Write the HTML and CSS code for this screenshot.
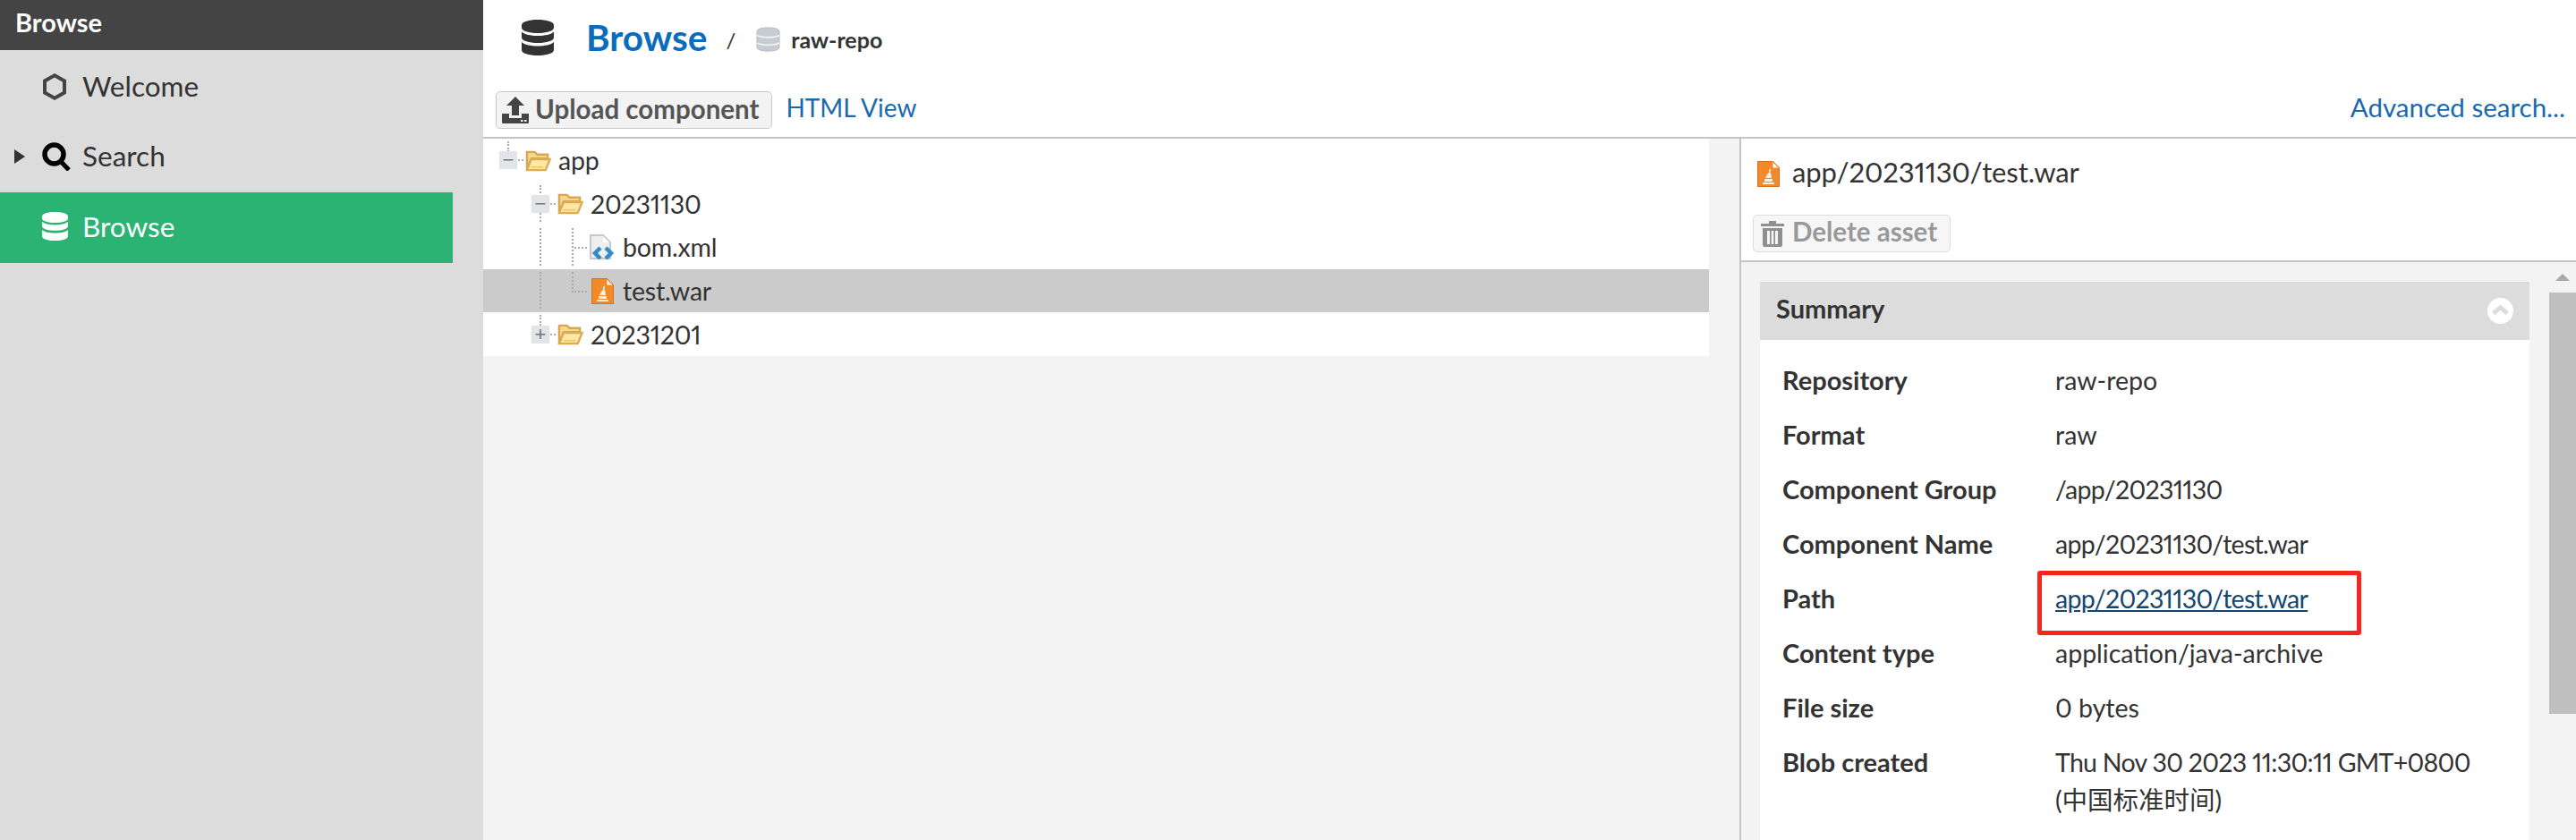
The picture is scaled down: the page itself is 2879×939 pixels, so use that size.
FILE: index.html
```html
<!DOCTYPE html>
<html lang="en">
<head>
<meta charset="utf-8">
<title>Browse</title>
<link rel="stylesheet" href="styles.css">
</head>
<body>
<svg class="defs" width="0" height="0" aria-hidden="true">
  <defs>
    <symbol id="db" viewBox="0 0 36 40">
      <path fill="currentColor" d="M18 0C8 0 0 2.500 0 6v3c0 3.500 8 6 18 6s18-2.500 18-6V6c0-3.500-8-6-18-6z"/>
      <path fill="currentColor" d="M0 13.500V20c0 3.500 8 6 18 6s18-2.500 18-6v-6.500c-3 3-10 4.500-18 4.500S3 16.500 0 13.500z"/>
      <path fill="currentColor" d="M0 25v9c0 3.500 8 6 18 6s18-2.500 18-6v-9c-3 3-10 4.500-18 4.500S3 28 0 25z"/>
    </symbol>
    <symbol id="folder" viewBox="0 0 30 25">
      <path fill="#f6d88c" stroke="#d6a755" stroke-width="2.500" d="M2 23V2.500h9l3 3h12V10H7z"/>
      <path fill="#fde9a6" stroke="#dcab56" stroke-width="2.500" d="M2 23.500l5-12.500h21.500l-5 12.500z"/>
      <path fill="none" stroke="#f8c95f" stroke-width="2" d="M7 20h14"/>
    </symbol>
    <symbol id="war" viewBox="0 0 25 29">
      <path fill="#f08a2a" stroke="#d9731a" d="M.5.500h17l7 7v21H.5z"/>
      <path fill="#fff" d="M17.500 1.500v6h6z"/>
      <path fill="#ffeede" d="M6 24h13v2H6zM8 20h9v3H8zM9 19l2-4 2-2v-3l2-2-.500 5 1 2 .500 4z"/>
    </symbol>
  </defs>
</svg>
<div class="app">
  <aside class="sidebar">
    <div class="side-title">Browse</div>
    <nav class="menu">
      <a class="menu-item">
        <span class="menu-icon"><svg class="ico-hex" viewBox="0 0 28 30"><path fill="none" stroke="#444" stroke-width="4" d="M14 2.300l11 6.200v13l-11 6.200L3 21.500v-13z"/></svg></span>
        <span>Welcome</span>
      </a>
      <a class="menu-item">
        <span class="caret"></span>
        <span class="menu-icon"><svg class="ico-search" viewBox="0 0 32 32"><circle cx="13.500" cy="13.500" r="10.500" fill="none" stroke="#000" stroke-width="5.500"/><path stroke="#000" stroke-width="5" d="M20.500 21l9.500 10"/></svg></span>
        <span>Search</span>
      </a>
      <a class="menu-item active">
        <span class="menu-icon"><svg class="ico-db"><use href="#db"/></svg></span>
        <span>Browse</span>
      </a>
    </nav>
  </aside>
  <main class="main">
    <header class="head">
      <svg class="head-db"><use href="#db"/></svg>
      <h1 class="head-title">Browse</h1>
      <span class="crumb-sep">/</span>
      <svg class="repo-db" viewBox="0 0 27 28">
        <path fill="#c6ccd1" stroke="#b4babf" d="M1 5c0-5.500 25-5.500 25 0v18c0 5.500-25 5.500-25 0z"/>
        <path fill="none" stroke="#eef0f2" stroke-width="2" d="M1 9.500c5 3 20 3 25 0M1 18c5 3 20 3 25 0"/>
      </svg>
      <span class="crumb">raw-repo</span>
    </header>
    <div class="toolbar">
      <button class="btn">
        <svg class="btn-ico" viewBox="0 0 30 30"><path fill="#444" d="M15 0l10 10h-6v11h-8V10H5z"/><path fill="#444" d="M0 19h8v5h14v-5h8v10a1 1 0 0 1-1 1H1a1 1 0 0 1-1-1z"/><path fill="#f3f3f3" d="M21 26h2.500v2H21zM25 26h2.500v2H25z"/></svg>
        <span class="btn-text">Upload component</span>
      </button>
      <a class="link">HTML View</a>
      <a class="link adv">Advanced search...</a>
    </div>
    <div class="panes">
      <section class="tree-pane">
        <ul class="tree">
          <li class="row">
            <span class="guide g-top lvl0"></span>
            <span class="expander">&#8722;</span>
            <span class="hdash"></span>
            <svg class="t-ico"><use href="#folder"/></svg>
            <span class="t-label">app</span>
          </li>
          <li class="row indent1">
            <span class="guide g-full lvl1"></span>
            <span class="expander">&#8722;</span>
            <span class="hdash"></span>
            <svg class="t-ico"><use href="#folder"/></svg>
            <span class="t-label">20231130</span>
          </li>
          <li class="row indent2">
            <span class="guide g-full lvl1"></span>
            <span class="guide g-full lvl2"></span>
            <span class="hdash long"></span>
            <svg class="t-ico xml" viewBox="0 0 29 28">
              <path fill="#eceeef" stroke="#c4c8cb" stroke-width="2" d="M1 1h14l8 8v18H1z"/>
              <path fill="#fff" d="M15 2v7h7z"/>
              <path fill="none" stroke="#2f8cc6" stroke-width="4.500" d="M12 15l-6 6 6 6M18 15l6 6-6 6"/>
            </svg>
            <span class="t-label">bom.xml</span>
          </li>
          <li class="row indent2 selected">
            <span class="guide g-full lvl1"></span>
            <span class="guide g-half lvl2"></span>
            <span class="hdash long"></span>
            <svg class="t-ico war"><use href="#war"/></svg>
            <span class="t-label">test.war</span>
          </li>
          <li class="row indent1">
            <span class="guide g-top lvl1"></span>
            <span class="expander">+</span>
            <span class="hdash"></span>
            <svg class="t-ico"><use href="#folder"/></svg>
            <span class="t-label">20231201</span>
          </li>
        </ul>
      </section>
      <section class="detail">
        <div class="detail-head">
          <div class="asset-title">
            <svg class="asset-ico"><use href="#war"/></svg>
            <span class="asset-name">app/20231130/test.war</span>
          </div>
          <button class="btn btn-disabled">
            <svg class="trash" viewBox="0 0 26 30"><path fill="#8f8f8f" fill-rule="evenodd" d="M0 4h9V1h8v3h9v3H0zM2 9h22v19a2 2 0 0 1-2 2H4a2 2 0 0 1-2-2zM7 12v15h3V12zM11.700 12v15h2.600V12zM16 12v15h3V12z"/></svg>
            <span class="btn-text">Delete asset</span>
          </button>
        </div>
        <div class="detail-body">
          <div class="scroll-content">
            <div class="panel">
              <div class="panel-head">
                <span class="panel-title">Summary</span>
                <span class="collapse"><svg viewBox="0 0 30 30"><circle cx="15" cy="15" r="15" fill="#fff"/><path fill="none" stroke="#dcdcdc" stroke-width="5" d="M7 18l8-7 8 7"/></svg></span>
              </div>
              <dl class="summary">
                <dt>Repository</dt><dd>raw-repo</dd>
                <dt>Format</dt><dd>raw</dd>
                <dt>Component Group</dt><dd><span class="tight">/app/20231130</span></dd>
                <dt>Component Name</dt><dd><span class="tight">app/20231130/test.war</span></dd>
                <dt>Path</dt><dd class="path-cell"><a class="path-link tight">app/20231130/test.war</a><span class="redbox"></span></dd>
                <dt>Content type</dt><dd>application/java-archive</dd>
                <dt>File size</dt><dd>0 bytes</dd>
                <dt>Blob created</dt><dd class="blob-cell"><span class="tight">Thu Nov 30 2023 11:30:11 GMT+0800</span><span>(中国标准时间)</span></dd>
              </dl>
            </div>
          </div>
          <div class="scrollbar">
            <div class="sb-up"><span class="sb-arrow"></span></div>
            <div class="sb-thumb"></div>
          </div>
        </div>
      </section>
    </div>
  </main>
</div>
</body>
</html>
```

FILE: styles.css
```css
* { box-sizing: border-box; }
html, body { margin: 0; height: 100%; overflow: hidden; }
body { font-family: Lato, "Noto Sans CJK SC", sans-serif; font-variant-numeric: proportional-nums; color: #333; background: #f3f3f3; font-size: 28px; }
.defs { position: absolute; }

.app { display: flex; height: 939px; }

.sidebar { width: 540px; flex: none; background: #dcdcdc; }
.side-title { height: 56px; background: #444; color: #fff; font-weight: 700; font-size: 29px; padding: 9px 0 0 17px; line-height: 32px; }
.menu-item { position: relative; display: flex; align-items: center; height: 79.500px; width: 506px; padding: 0 0 2px 47px; font-size: 31.500px; color: #333; }
.menu-item:first-child { padding-bottom: 0; }
.menu-item.active { background: #2bb373; color: #fff; height: 79px; padding-bottom: 3px; }
.menu-icon { width: 45px; flex: none; display: flex; align-items: center; }
.ico-hex { width: 28px; height: 30px; margin-top: 3px; }
.ico-search { width: 32px; height: 32px; margin-top: 2px; }
.ico-db { width: 29px; height: 32px; color: #fff; }
.caret { position: absolute; left: 16px; top: 31px; border-left: 12px solid #333; border-top: 8.500px solid transparent; border-bottom: 8.500px solid transparent; }

.main { flex: 1; min-width: 0; display: flex; flex-direction: column; }
.head { height: 102px; background: #fff; display: flex; align-items: center; padding: 0 0 14px 43px; flex: none; }
.head-db { width: 36px; height: 40px; color: #333; flex: none; margin-bottom: 4px; }
.head-title { margin: 0 0 6px 36px; font-size: 40.500px; font-weight: 700; color: #0a6cbd; }
.crumb-sep { margin-left: 21px; font-size: 24px; color: #333; }
.repo-db { width: 27px; height: 28px; margin-left: 23px; flex: none; }
.crumb { margin-left: 12px; font-size: 25px; font-weight: 700; }

.toolbar { height: 53px; flex: none; background: #fff; border-bottom: 2px solid #c4c4c4; display: flex; align-items: flex-start; padding-left: 14px; }
.btn { display: inline-flex; align-items: center; height: 42px; padding: 0 14px 0 6px; background: #f3f3f3; border: 1px solid #c9c9c9; border-radius: 5px; font: 700 29.500px Lato, sans-serif; font-variant-numeric: proportional-nums; color: #555; }
.btn-text { margin-bottom: 3px; }
.btn-ico { width: 30px; height: 30px; margin-right: 7px; flex: none; }
.link { color: #1a69ad; font-size: 28px; margin-left: 15px; line-height: 36px; }
.adv { margin-left: auto; margin-right: 12px; font-size: 29.500px; }

.panes { flex: 1; display: flex; min-height: 0; }
.tree-pane { width: 1370px; flex: none; }
.tree { list-style: none; margin: 0; padding: 0; background: #fff; }
.row { position: relative; display: flex; align-items: center; height: 48.600px; padding-left: 18px; font-size: 28.500px; color: #333; }
.row.indent1 { padding-left: 54px; }
.row.indent2 { padding-left: 100px; }
.row.selected { background: #cbcbcb; }
.expander { position: relative; width: 20px; height: 20px; flex: none; background: #e2e4e7; color: #777; font: 22px/20px "Liberation Sans", sans-serif; text-align: center; }
.hdash { width: 6px; margin-left: 1px; border-top: 2px dotted #aaa; flex: none; }
.hdash.long { position: absolute; left: 102px; top: 24px; width: 14px; margin: 0; }
.t-ico { width: 29px; height: 25px; margin-left: 2px; flex: none; }
.t-ico.xml { margin-left: 19px; width: 29px; height: 28px; }
.t-ico.war { margin-left: 21px; width: 25px; height: 29px; margin-right: 2px; }
.t-label { margin-left: 8px; letter-spacing: -0.200px; }
.guide { position: absolute; border-left: 2px dotted #aaa; }
.lvl0 { left: 27px; }
.lvl1 { left: 63px; }
.lvl2 { left: 99px; }
.g-top { top: 3px; height: 12px; }
.g-full { top: 3px; bottom: 4px; }
.g-half { top: 3px; height: 23px; }

.detail { flex: 1; min-width: 0; margin-left: 34px; border-left: 2px solid #c4c4c4; display: flex; flex-direction: column; }
.detail-head { height: 138px; flex: none; background: #fff; border-bottom: 2px solid #c4c4c4; padding: 25px 0 0 13px; }
.asset-title { display: flex; align-items: center; font-size: 31px; height: 29px; padding-left: 5px; }
.asset-ico { width: 25px; height: 29px; margin-right: 14px; flex: none; }
.asset-name { margin-bottom: 6px; letter-spacing: -0.100px; }
.btn-disabled { margin-top: 31px; color: #999; background: #f6f6f6; border-color: #dcdcdc; padding: 0 14px 0 8px; }
.btn-disabled .btn-text { margin-bottom: 5px; margin-left: -2px; }
.trash { width: 26px; height: 30px; margin-right: 11px; flex: none; }

.detail-body { flex: 1; display: flex; min-height: 0; overflow: hidden; }
.scroll-content { flex: 1; min-width: 0; padding: 22px 22px 0 21px; }
.panel { background: #fff; height: 100%; }
.panel-head { height: 65px; background: #dcdcdc; display: flex; align-items: center; justify-content: space-between; padding: 0 18px; font-weight: 700; font-size: 29px; }
.panel-title { margin-bottom: 6px; }
.collapse { width: 29px; height: 29px; }
.collapse svg { display: block; width: 29px; height: 29px; }
.summary { margin: 0; padding: 16px 0 0 25px; display: grid; grid-template-columns: 305px 1fr; grid-auto-rows: minmax(61px, auto); line-height: 42px; font-size: 28.500px; align-items: start; }
.summary dt { font-weight: 700; padding-top: 8px; font-size: 29px; }
.summary dd { margin: 0; padding: 8px 20px 0 0; }
.blob-cell { display: flex; flex-direction: column; }
.tight { letter-spacing: -0.700px; }
.path-cell { position: relative; }
.path-link { color: #14466f; text-decoration: underline; }
.redbox { position: absolute; left: -20px; top: -2px; width: 362px; height: 72px; border: 5px solid #f5261c; border-radius: 3px; }

.scrollbar { width: 30px; flex: none; }
.sb-up { height: 34px; display: flex; align-items: center; justify-content: center; }
.sb-arrow { border-bottom: 8px solid #a9a9a9; border-left: 8px solid transparent; border-right: 8px solid transparent; }
.sb-thumb { height: 471px; background: #bfbfbf; }
```
